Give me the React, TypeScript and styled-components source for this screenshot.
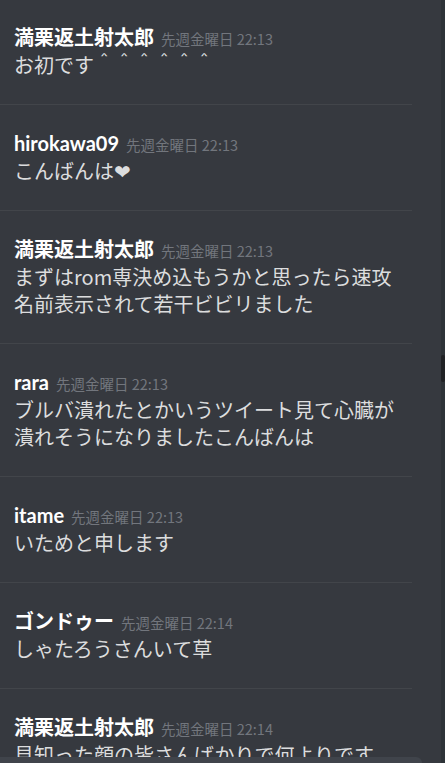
import React from "react";
import styled, { createGlobalStyle } from "styled-components";

const GlobalStyle = createGlobalStyle`
  html, body {
    margin: 0;
    padding: 0;
    background: #36393f;
  }
  body {
    font-family: "Noto Sans CJK JP", "Noto Sans", sans-serif;
  }
`;

const Shell = styled.div`
  display: flex;
  width: 445px;
  height: 763px;
  background: #36393f;
  overflow: hidden;
`;

const Main = styled.div`
  flex: 1;
  min-width: 0;
  display: flex;
  flex-direction: column;
`;

const MessageList = styled.div`
  flex: 1;
  min-height: 0;
  overflow: hidden;
  display: flex;
  flex-direction: column;
  padding-right: 29px;
`;

const Message = styled.div`
  flex-shrink: 0;
  padding: 25px 0 26px 14px;
  border-bottom: 1px solid #42454a;
  &:first-child {
    padding-top: 24px;
  }
`;

const Header = styled.div`
  line-height: 27px;
  height: 27px;
  white-space: nowrap;
`;

const Username = styled.span`
  color: #ffffff;
  font-family: Lato, "Noto Sans CJK JP", sans-serif;
  font-size: 20px;
  font-weight: 700;
`;

const Timestamp = styled.span`
  color: #72767d;
  font-size: 14.5px;
  margin-left: 7px;
`;

const Body = styled.div`
  color: #dcddde;
  font-size: 20px;
  line-height: 27px;
  white-space: pre-line;
`;

const Composer = styled.div`
  flex-shrink: 0;
  height: 6px;
  margin-right: 19px;
  background: #40444b;
  border-top-right-radius: 8px;
`;

const ScrollTrack = styled.div`
  width: 4px;
  flex-shrink: 0;
  background: #2e3338;
  padding-top: 355px;
  box-sizing: border-box;
`;

const ScrollThumb = styled.div`
  height: 27px;
  background: #202225;
  border-radius: 2px;
`;

const messages = [
  { name: "満栗返土射太郎", time: "先週金曜日 22:13", text: "お初です＾＾＾＾＾＾" },
  { name: "hirokawa09", time: "先週金曜日 22:13", text: "こんばんは❤\uFE0E" },
  {
    name: "満栗返土射太郎",
    time: "先週金曜日 22:13",
    text: "まずはrom専決め込もうかと思ったら速攻\n名前表示されて若干ビビリました",
  },
  {
    name: "rara",
    time: "先週金曜日 22:13",
    text: "ブルバ潰れたとかいうツイート見て心臓が\n潰れそうになりましたこんばんは",
  },
  { name: "itame", time: "先週金曜日 22:13", text: "いためと申します" },
  { name: "ゴンドゥー", time: "先週金曜日 22:14", text: "しゃたろうさんいて草" },
  { name: "満栗返土射太郎", time: "先週金曜日 22:14", text: "見知った顔の皆さんばかりで何よりです" },
];

export default function App() {
  return (
    <>
      <GlobalStyle />
      <Shell>
        <Main>
          <MessageList>
            {messages.map((m, i) => (
              <Message key={i}>
                <Header>
                  <Username>{m.name}</Username>
                  <Timestamp>{m.time}</Timestamp>
                </Header>
                <Body>{m.text}</Body>
              </Message>
            ))}
          </MessageList>
          <Composer />
        </Main>
        <ScrollTrack>
          <ScrollThumb />
        </ScrollTrack>
      </Shell>
    </>
  );
}
